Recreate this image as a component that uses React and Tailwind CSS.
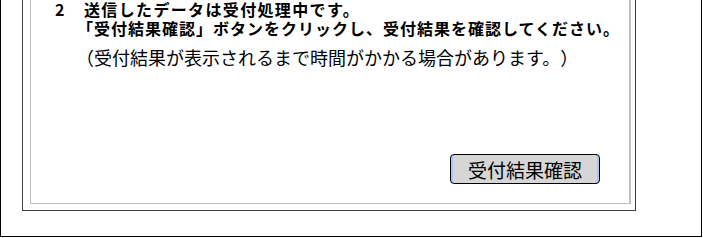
const jp = { fontFamily: '"Noto Sans CJK JP", "Liberation Sans", sans-serif' };

const App = () => {
    return (
        <div className="w-[702px] h-[237px] border-x border-b border-black bg-white [text-spacing-trim:space-all]" style={jp}>
            <div className="ml-[21px] w-[614px] h-[211px] border-x border-b border-[#404040] pl-[7px] pr-[4px] pb-[6px]">
                <div className="h-full border-l border-r-2 border-b border-[#c0c0c0] flex flex-col text-black">
                    <div className="flex pl-[24px]">
                        <div className="w-[29px] text-[16px] leading-[19px] font-bold">2</div>
                        <div className="flex flex-col">
                            <p className="text-[16px] leading-[19px] font-bold tracking-[1.35px]">送信したデータは受付処理中です。</p>
                            <p className="text-[16px] leading-[19px] font-bold tracking-[1px] -ml-[7px]">
                                「受付結果確認」ボタンをクリックし、受付結果を確認してください。
                            </p>
                            <p className="mt-[10px] text-[18px] leading-[18px] -ml-[8px]">
                                （受付結果が表示されるまで時間がかかる場合があります。）
                            </p>
                        </div>
                    </div>
                    <div className="mt-auto flex justify-end pr-[29px] pb-[19px]">
                        <button className="w-[150px] h-[30px] rounded-[4px] border border-black bg-[#d6d6d6] text-[19px] leading-none text-black shadow-[inset_2px_0_0_#a9c6f5,inset_-2px_0_0_#a9c6f5]">
                            受付結果確認
                        </button>
                    </div>
                </div>
            </div>
        </div>
    );
};

export default App;
